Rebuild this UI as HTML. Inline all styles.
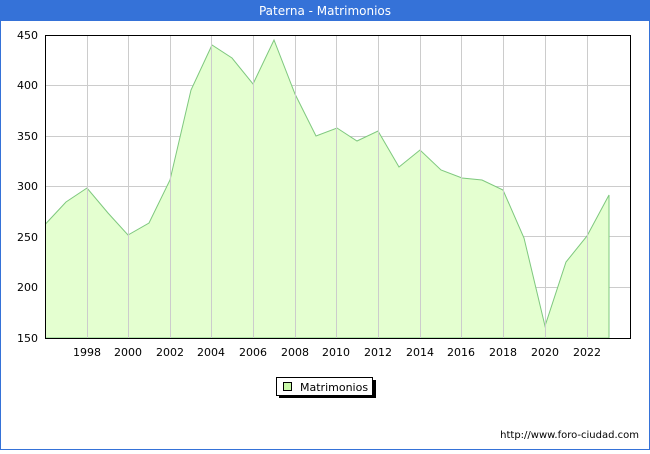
<!DOCTYPE html><html><head><style>body{margin:0;width:650px;height:450px;overflow:hidden;background:#fff;font-family:"DejaVu Sans","Liberation Sans",sans-serif}</style></head><body>
<svg width="650" height="450" xmlns="http://www.w3.org/2000/svg" font-family="DejaVu Sans, Liberation Sans, sans-serif">
<rect x="0.5" y="0.5" width="649" height="449" fill="#fff" stroke="#3572d8"/>
<rect x="0" y="0" width="650" height="21" fill="#3572d8"/>
<text x="325" y="15" fill="#fff" font-size="12" text-anchor="middle">Paterna - Matrimonios</text>
<g stroke="#cccccc" stroke-width="1">
<line x1="45" y1="287.5" x2="630" y2="287.5"/><line x1="45" y1="236.5" x2="630" y2="236.5"/><line x1="45" y1="186.5" x2="630" y2="186.5"/><line x1="45" y1="136.5" x2="630" y2="136.5"/><line x1="45" y1="85.5" x2="630" y2="85.5"/>
</g>
<polygon fill="#e4ffd0" stroke="#7ec87e" stroke-width="1" points="45.5,338 45.5,224 66,202 87,188 108,213 128,235 149,223 170,180 191,90 212,45 232,58 253,84 274,40 295,94 316,136 337,128 357,141 378,131 399,167 420,150 441,170 462,178 482,180 503,190 524,238 545,326 566,262 587,236 609,195 609,338"/>
<g stroke="#cccccc" stroke-width="1">
<line x1="87.5" y1="35" x2="87.5" y2="338"/><line x1="128.5" y1="35" x2="128.5" y2="338"/><line x1="170.5" y1="35" x2="170.5" y2="338"/><line x1="211.5" y1="35" x2="211.5" y2="338"/><line x1="253.5" y1="35" x2="253.5" y2="338"/><line x1="295.5" y1="35" x2="295.5" y2="338"/><line x1="336.5" y1="35" x2="336.5" y2="338"/><line x1="378.5" y1="35" x2="378.5" y2="338"/><line x1="420.5" y1="35" x2="420.5" y2="338"/><line x1="461.5" y1="35" x2="461.5" y2="338"/><line x1="503.5" y1="35" x2="503.5" y2="338"/><line x1="545.5" y1="35" x2="545.5" y2="338"/><line x1="587.5" y1="35" x2="587.5" y2="338"/>
</g>
<rect x="45.5" y="35.5" width="585" height="303" fill="none" stroke="#000"/>
<g font-size="11" fill="#000" text-anchor="end">
<text x="38" y="39">450</text><text x="38" y="89">400</text><text x="38" y="140">350</text><text x="38" y="190">300</text><text x="38" y="241">250</text><text x="38" y="291">200</text><text x="38" y="342">150</text>
</g>
<g font-size="11" fill="#000" text-anchor="middle">
<text x="87" y="356">1998</text><text x="128" y="356">2000</text><text x="170" y="356">2002</text><text x="211" y="356">2004</text><text x="253" y="356">2006</text><text x="295" y="356">2008</text><text x="336" y="356">2010</text><text x="378" y="356">2012</text><text x="420" y="356">2014</text><text x="461" y="356">2016</text><text x="503" y="356">2018</text><text x="545" y="356">2020</text><text x="587" y="356">2022</text>
</g>
<rect x="279" y="380" width="97" height="18" fill="#000"/>
<rect x="276.5" y="377.5" width="96" height="18" fill="#fff" stroke="#000"/>
<rect x="283.5" y="382.5" width="8" height="8" fill="#c8f8a8" stroke="#000"/>
<text x="300" y="391" font-size="11">Matrimonios</text>
<text x="639" y="438" font-size="10" text-anchor="end">http://www.foro-ciudad.com</text>
</svg></body></html>
